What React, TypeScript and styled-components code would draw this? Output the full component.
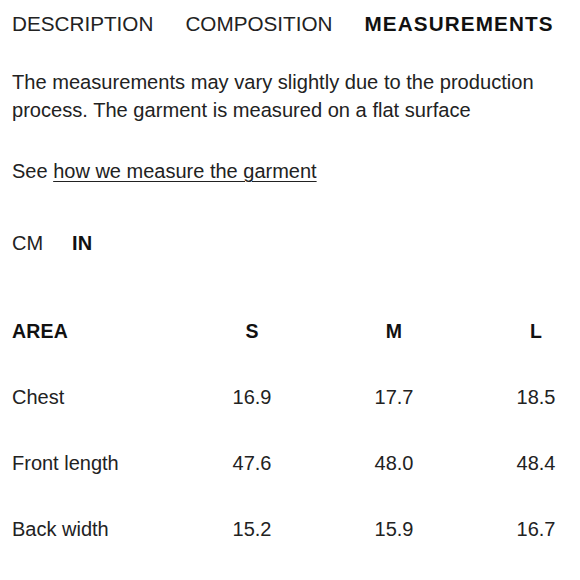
import styled, { createGlobalStyle } from "styled-components";

const GlobalStyle = createGlobalStyle`
  body {
    margin: 0;
    background: #fff;
    font-family: "Liberation Sans", Arial, sans-serif;
    color: #222;
  }
`;

const sizes = ["S", "M", "L"];

const rows = [
  { area: "Chest", values: ["16.9", "17.7", "18.5"] },
  { area: "Front length", values: ["47.6", "48.0", "48.4"] },
  { area: "Back width", values: ["15.2", "15.9", "16.7"] },
];

const App = () => {
  return (
    <Page>
      <GlobalStyle />
      <Tabs>
        <Tab>DESCRIPTION</Tab>
        <Tab>COMPOSITION</Tab>
        <Tab $active>MEASUREMENTS</Tab>
      </Tabs>
      <Intro>
        The measurements may vary slightly due to the production process. The
        garment is measured on a flat surface
      </Intro>
      <SeeLine>
        See <GuideLink href="#">how we measure the garment</GuideLink>
      </SeeLine>
      <Units>
        <Unit>CM</Unit>
        <Unit $active>IN</Unit>
      </Units>
      <Table>
        <HeadCell $first>AREA</HeadCell>
        {sizes.map((s) => (
          <HeadCell key={s}>{s}</HeadCell>
        ))}
        {rows.map((row) => (
          <>
            <Cell key={row.area} $first>
              {row.area}
            </Cell>
            {row.values.map((v, i) => (
              <Cell key={row.area + i}>{v}</Cell>
            ))}
          </>
        ))}
      </Table>
    </Page>
  );
};

const Page = styled.div`
  padding: 0 12px;
  width: 580px;
  box-sizing: border-box;
`;

const Tabs = styled.div`
  display: flex;
  gap: 32px;
  height: 47px;
  align-items: center;
`;

const Tab = styled.div<{ $active?: boolean }>`
  font-size: 20.7px;
  font-weight: ${(p) => (p.$active ? 700 : 400)};
  letter-spacing: ${(p) => (p.$active ? "1.1px" : "0")};
  color: ${(p) => (p.$active ? "#111" : "#222")};
`;

const Intro = styled.p`
  margin: 21px 0 0;
  font-size: 20.1px;
  line-height: 28px;
`;

const SeeLine = styled.p`
  margin: 33px 0 0;
  font-size: 20px;
  line-height: 28px;
`;

const GuideLink = styled.a`
  color: inherit;
  text-decoration: underline;
  text-underline-offset: 3px;
  text-decoration-thickness: 1px;
`;

const Units = styled.div`
  display: flex;
  gap: 29px;
  margin-top: 44px;
  font-size: 20px;
  line-height: 28px;
`;

const Unit = styled.span<{ $active?: boolean }>`
  font-weight: ${(p) => (p.$active ? 700 : 400)};
  color: ${(p) => (p.$active ? "#111" : "#222")};
`;

const Table = styled.div`
  display: grid;
  grid-template-columns: 1fr 64px 64px 64px;
  column-gap: 78px;
  grid-auto-rows: 66px;
  margin-top: 41px;
  align-items: center;
`;

const HeadCell = styled.div<{ $first?: boolean }>`
  font-size: 19.5px;
  font-weight: 700;
  letter-spacing: 0.2px;
  color: #111;
  text-align: ${(p) => (p.$first ? "left" : "center")};
`;

const Cell = styled.div<{ $first?: boolean }>`
  font-size: 20px;
  color: #222;
  text-align: ${(p) => (p.$first ? "left" : "center")};
`;

export default App;
